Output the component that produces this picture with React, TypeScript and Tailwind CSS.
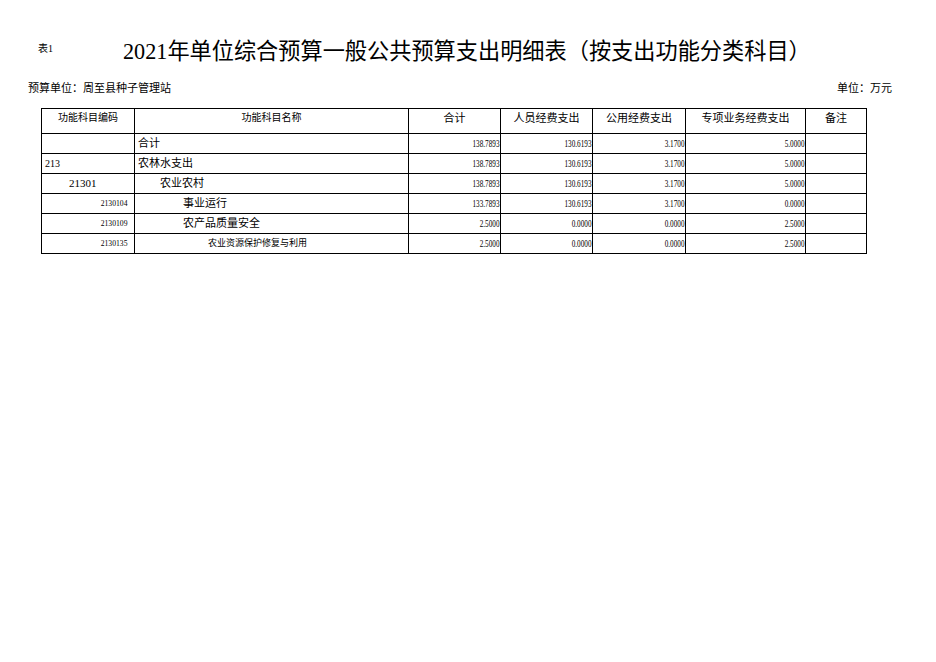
import React from 'react'

type Row = {
  code: string
  codeClass: string
  name: string
  nameClass: string
  total: string
  staff: string
  public: string
  special: string
}

const rows: Row[] = [
  { code: '', codeClass: '', name: '合计', nameClass: 'pl-[3px] text-[11px]', total: '138.7893', staff: '130.6193', public: '3.1700', special: '5.0000' },
  { code: '213', codeClass: 'pl-[3px] text-left text-[10px]', name: '农林水支出', nameClass: 'pl-[3px] text-[11px]', total: '138.7893', staff: '130.6193', public: '3.1700', special: '5.0000' },
  { code: '21301', codeClass: 'pl-[27px] text-left text-[11px]', name: '农业农村', nameClass: 'pl-[25px] text-[11px]', total: '138.7893', staff: '130.6193', public: '3.1700', special: '5.0000' },
  { code: '2130104', codeClass: 'pr-[7px] text-right text-[9px] small', name: '事业运行', nameClass: 'pl-[48px] text-[11px]', total: '133.7893', staff: '130.6193', public: '3.1700', special: '0.0000' },
  { code: '2130109', codeClass: 'pr-[7px] text-right text-[9px] small', name: '农产品质量安全', nameClass: 'pl-[48px] text-[11px]', total: '2.5000', staff: '0.0000', public: '0.0000', special: '2.5000' },
  { code: '2130135', codeClass: 'pr-[7px] text-right text-[9px] small', name: '农业资源保护修复与利用', nameClass: 'pl-[73px] text-[9px]', total: '2.5000', staff: '0.0000', public: '0.0000', special: '2.5000' },
]

// 数字列：窄体右对齐，贴着右边框
function Num({ value }: { value: string }) {
  return (
    <td className="border border-black p-0 pr-[1px] text-right align-middle text-[10px] leading-none">
      <span className="inline-block origin-right scale-x-[0.72]">{value}</span>
    </td>
  )
}

export default function App() {
  return (
    <div className="h-[662px] w-[936px] bg-white font-['Liberation_Serif','Noto_Sans_CJK_SC',serif] text-black">
      <div className="flex items-start pl-[38px] pt-[41px]">
        <span className="mt-[3px] text-[10px] leading-none">表1</span>
        <h1 className="ml-[70px] text-[22.2px] font-normal leading-none">
          2021年单位综合预算一般公共预算支出明细表（按支出功能分类科目）
        </h1>
      </div>

      <div className="mt-[20px] flex items-center justify-between pl-[28px] pr-[44px] text-[11px] leading-none">
        <span>预算单位：周至县种子管理站</span>
        <span>单位：万元</span>
      </div>

      <table className="ml-[41px] mt-[14px] w-[825px] table-fixed border-collapse border border-black">
        <colgroup>
          <col className="w-[93px]" />
          <col className="w-[274px]" />
          <col className="w-[92px]" />
          <col className="w-[92px]" />
          <col className="w-[93px]" />
          <col className="w-[120px]" />
          <col className="w-[61px]" />
        </colgroup>
        <thead>
          <tr className="h-[25px]">
            <th className="border border-black pt-[4px] text-center align-top text-[10px] font-normal leading-none">功能科目编码</th>
            <th className="border border-black pt-[4px] text-center align-top text-[10px] font-normal leading-none">功能科目名称</th>
            <th className="border border-black pt-[4px] text-center align-top text-[11px] font-normal leading-none">合计</th>
            <th className="border border-black pt-[4px] text-center align-top text-[11px] font-normal leading-none">人员经费支出</th>
            <th className="border border-black pt-[4px] text-center align-top text-[11px] font-normal leading-none">公用经费支出</th>
            <th className="border border-black pt-[4px] text-center align-top text-[11px] font-normal leading-none">专项业务经费支出</th>
            <th className="border border-black pt-[4px] text-center align-top text-[11px] font-normal leading-none">备注</th>
          </tr>
        </thead>
        <tbody>
          {rows.map((r, i) => (
            <tr key={i} className="h-[20px]">
              <td className={`border border-black p-0 align-middle leading-none ${r.codeClass}`}>
                {r.codeClass.includes('small') ? (
                  <span className="inline-block origin-right scale-x-[0.85]">{r.code}</span>
                ) : (
                  r.code
                )}
              </td>
              <td className={`border border-black p-0 align-middle leading-none ${r.nameClass}`}>{r.name}</td>
              <Num value={r.total} />
              <Num value={r.staff} />
              <Num value={r.public} />
              <Num value={r.special} />
              <td className="border border-black p-0" />
            </tr>
          ))}
        </tbody>
      </table>
    </div>
  )
}
